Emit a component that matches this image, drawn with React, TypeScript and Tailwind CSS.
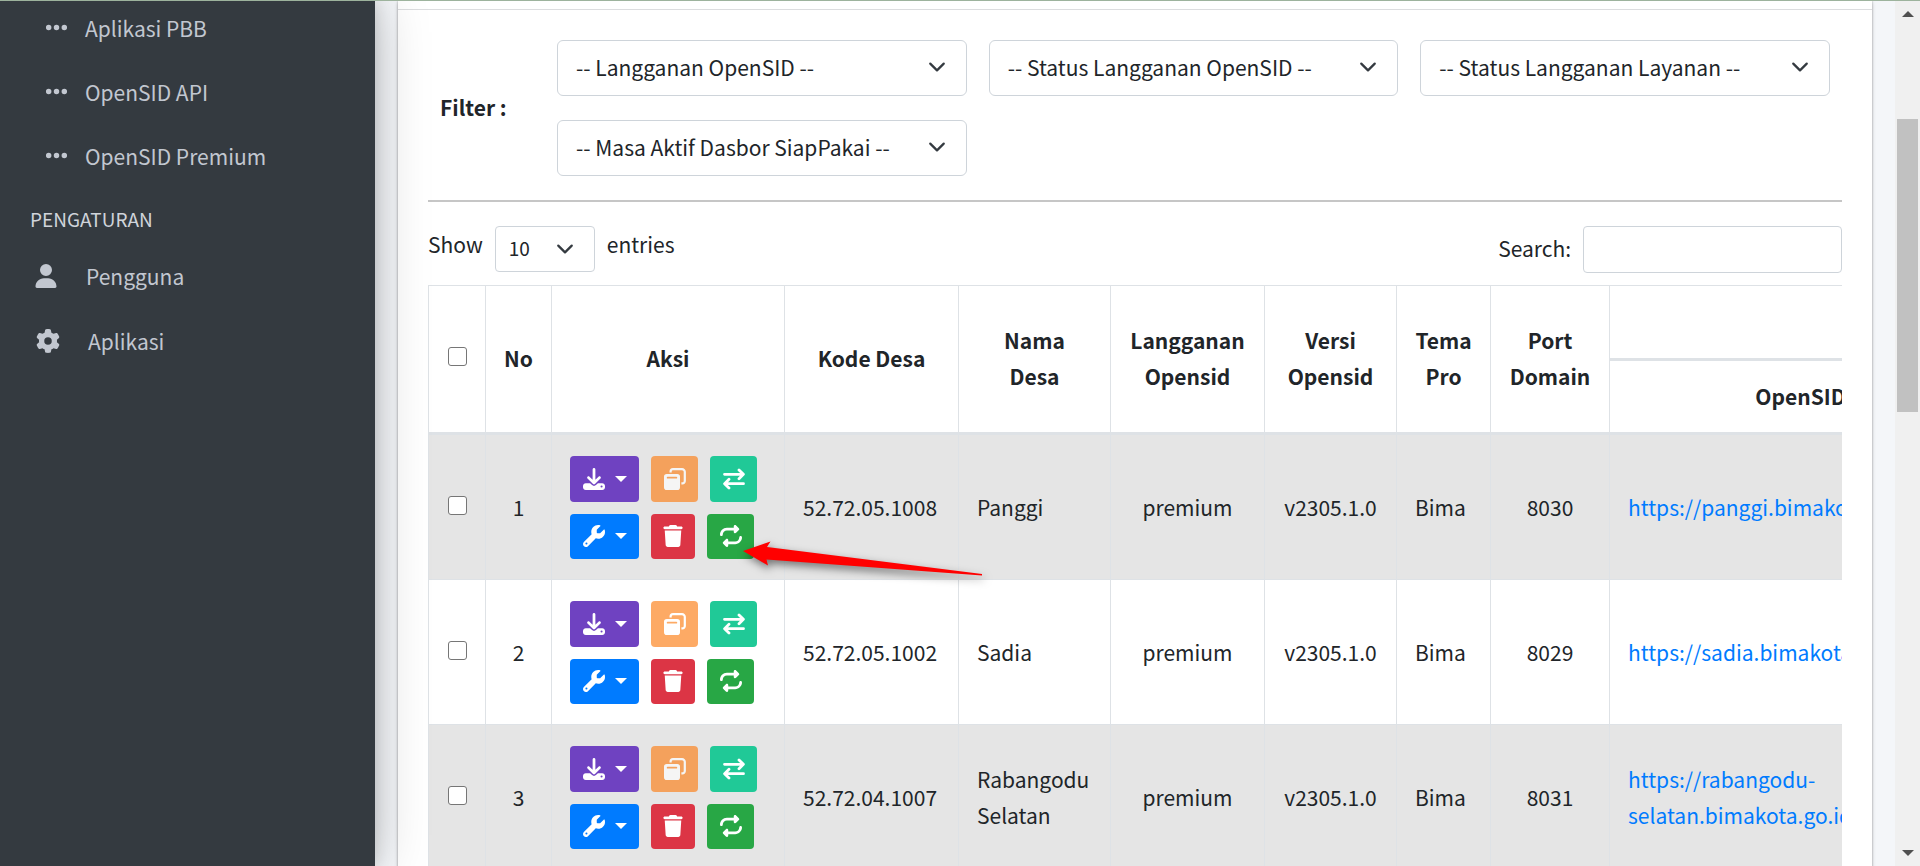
import { useState } from 'react'
import { FaDownload, FaEllipsis, FaGear, FaRepeat, FaTrash, FaUser, FaWrench } from 'react-icons/fa6'

interface Desa {
  no: number
  kode: string
  nama: string
  langganan: string
  versi: string
  tema: string
  port: string
  url: string
}

const daftarDesa: Desa[] = [
  { no: 1, kode: '52.72.05.1008', nama: 'Panggi', langganan: 'premium', versi: 'v2305.1.0', tema: 'Bima', port: '8030', url: 'https://panggi.bimakota.go.id' },
  { no: 2, kode: '52.72.05.1002', nama: 'Sadia', langganan: 'premium', versi: 'v2305.1.0', tema: 'Bima', port: '8029', url: 'https://sadia.bimakota.go.id' },
  { no: 3, kode: '52.72.04.1007', nama: 'Rabangodu Selatan', langganan: 'premium', versi: 'v2305.1.0', tema: 'Bima', port: '8031', url: 'https://rabangodu-selatan.bimakota.go.id' },
]

const filters = [
  '-- Langganan OpenSID --',
  '-- Status Langganan OpenSID --',
  '-- Status Langganan Layanan --',
  '-- Masa Aktif Dasbor SiapPakai --',
]

const modules = ['Aplikasi PBB', 'OpenSID API', 'OpenSID Premium']

const checkboxClass =
  'appearance-none block mx-auto mb-1 w-[19px] h-[19px] rounded-[3px] border border-[#767676] bg-white checked:bg-[#007bff]'

function Chevron({ className }: { className: string }) {
  return (
    <svg viewBox="0 0 16 16" className={`absolute pointer-events-none w-[18px] h-[18px] ${className}`} fill="none" stroke="#343a40" strokeWidth="2" strokeLinecap="round" strokeLinejoin="round">
      <path d="m2 5 6 6 6-6" />
    </svg>
  )
}

function Caret() {
  return (
    <svg viewBox="0 0 12 6" className="w-3 h-[6px]" fill="currentColor">
      <path d="M0 0h12L6 6z" />
    </svg>
  )
}

function CopyIcon() {
  return (
    <svg viewBox="0 0 22 22" className="w-[22px] h-[22px]">
      <path
        fill="currentColor"
        fillRule="evenodd"
        d="M2.800 6H13.200A2.800 2.800 0 0 1 16 8.800V19.200A2.800 2.800 0 0 1 13.200 22H2.800A2.800 2.800 0 0 1 0 19.200V8.800A2.800 2.800 0 0 1 2.800 6ZM3.700 8.700a.9.9 0 0 0 0 1.900H12.300a.9.9 0 0 0 0-1.900Z"
      />
      <path fill="none" stroke="currentColor" strokeWidth="2.2" strokeLinecap="butt" d="M6.600 4.600V3.600A2.400 2.400 0 0 1 9 1.200H18A2.800 2.800 0 0 1 20.800 4V13A2.400 2.400 0 0 1 18.400 15.400H17.400" />
    </svg>
  )
}

function SwapIcon() {
  return (
    <svg viewBox="0 0 22 22" className="w-[22px] h-[22px]" fill="none" stroke="currentColor" strokeWidth="2.8" strokeLinecap="round" strokeLinejoin="round">
      <path d="M1.500 6.300H20M16 1.900 20.400 6.300 16 10.700" />
      <path d="M20.500 15.700H2M6 11.300 1.600 15.700 6 20.100" />
    </svg>
  )
}

function Pointer() {
  return (
    <svg
      viewBox="0 0 250 44"
      className="absolute left-[33px] top-[22px] z-20 w-[250px] h-11 max-w-none pointer-events-none overflow-visible drop-shadow-[2px_4px_4px_rgba(0,0,0,0.5)]"
    >
      <path d="M3 15 30.500 5.500 27 11 242 38 242 39.500 26.500 23.500 28 29.500Z" fill="#ff0000" />
    </svg>
  )
}

function Actions({ marked }: { marked: boolean }) {
  return (
    <div className="flex flex-col gap-3 text-white">
      <div className="flex gap-3">
        <button aria-label="Unduh" className="flex items-center justify-center gap-[10px] w-[69px] h-[46px] rounded bg-[#6f42c1]">
          <FaDownload size={22} />
          <Caret />
        </button>
        <button aria-label="Salin" disabled className="flex items-center justify-center w-[47px] h-[46px] rounded bg-[#fd7e14] opacity-65">
          <CopyIcon />
        </button>
        <button aria-label="Pindah" className="flex items-center justify-center w-[47px] h-[46px] rounded bg-[#20c997]">
          <SwapIcon />
        </button>
      </div>
      <div className="flex gap-3">
        <button aria-label="Konfigurasi" className="flex items-center justify-center gap-[10px] w-[69px] h-[45px] rounded bg-[#007bff]">
          <FaWrench size={22} />
          <Caret />
        </button>
        <button aria-label="Hapus" className="flex items-center justify-center w-11 h-[45px] rounded bg-[#dc3545]">
          <FaTrash size={22} />
        </button>
        <div className="relative">
          <button aria-label="Perbarui" className="flex items-center justify-center w-[47px] h-[45px] rounded bg-[#28a745]">
            <FaRepeat size={22} />
          </button>
          {marked && <Pointer />}
        </div>
      </div>
    </div>
  )
}

function Sidebar() {
  return (
    <aside className="relative z-10 shrink-0 w-[375px] bg-[#343a40] text-[#c2c7d0] shadow-[0_0_52px_rgba(0,0,0,0.22),0_0_15px_rgba(0,0,0,0.15)]">
      <nav className="-mt-1">
        {modules.map((item) => (
          <a key={item} href="#" className="flex items-center h-16 pb-[3px] pl-11">
            <FaEllipsis size={25} className="mr-4" />
            {item}
          </a>
        ))}
        <div className="flex items-center h-14 pt-1 pl-[30px] text-[19px] text-[#d0d4db]">PENGATURAN</div>
        <a href="#" className="flex items-center h-[65px] pb-[3px] pl-[34px]">
          <FaUser size={24} className="mr-7" />
          Pengguna
        </a>
        <a href="#" className="flex items-center h-[65px] pb-[3px] pl-9">
          <FaGear size={24} className="mr-7" />
          Aplikasi
        </a>
      </nav>
    </aside>
  )
}

export default function App() {
  const [selected, setSelected] = useState<number[]>([])

  const toggle = (no: number) => {
    setSelected(selected.includes(no) ? selected.filter((n) => n !== no) : [...selected, no])
  }

  const toggleAll = () => {
    setSelected(selected.length === daftarDesa.length ? [] : daftarDesa.map((d) => d.no))
  }

  return (
    <div className="flex h-screen overflow-hidden border-t border-[#9db39d] bg-[#f4f6f9] font-['Noto_Sans_CJK_JP',sans-serif] text-[21px] leading-9 text-[#212529]">
      <Sidebar />

      <main className="flex-1 min-w-0 px-[23px]">
        <div className="min-h-full bg-white shadow-[0_0_2px_rgba(0,0,0,0.3),0_2px_4px_rgba(0,0,0,0.2)]">
          <div className="h-[9px] border-b border-[#dcdddf]" />
          <div className="px-[30px] pt-[30px]">
            <div className="flex items-center pl-3">
              <div className="w-[117px] pb-[2px] font-bold">Filter :</div>
              <div className="flex-1 grid grid-cols-3 gap-x-[22px] gap-y-6 pr-3">
                {filters.map((label) => (
                  <div key={label} className="relative">
                    <select aria-label={label} className="appearance-none block w-full h-14 pb-[2px] pl-[18px] pr-12 rounded-[6px] border border-[#ced4da] bg-white">
                      <option>{label}</option>
                    </select>
                    <Chevron className="right-[21px] top-[18px]" />
                  </div>
                ))}
              </div>
            </div>

            <hr className="mt-6 mb-6 border-0 h-[2px] bg-[#c6c6c6]" />

            <div className="flex justify-between">
              <div className="flex items-start">
                <label htmlFor="entries">Show</label>
                <div className="relative mx-3">
                  <select id="entries" className="appearance-none block w-[100px] h-[46px] pb-[2px] pl-[13px] rounded border border-[#ced4da] bg-white text-[19px]">
                    <option>10</option>
                  </select>
                  <Chevron className="right-[21px] top-[14px]" />
                </div>
                <span>entries</span>
              </div>
              <div className="flex items-center gap-3">
                <label htmlFor="search" className="pb-[3px]">Search:</label>
                <input id="search" type="search" className="w-[259px] h-[47px] px-3 rounded border border-[#ced4da] bg-white" />
              </div>
            </div>

            <div className="mt-3 overflow-hidden">
              <table className="table-fixed border-collapse w-[1563px] [&_td]:border [&_th]:border [&_td]:border-[#dee2e6] [&_th]:border-[#dee2e6] [&_th]:border-b-[3px] [&_th]:pb-[2px] [&_td]:px-[18px]">
                <colgroup>
                  <col className="w-[57px]" />
                  <col className="w-[66px]" />
                  <col className="w-[233px]" />
                  <col className="w-[174px]" />
                  <col className="w-[152px]" />
                  <col className="w-[154px]" />
                  <col className="w-[132px]" />
                  <col className="w-[94px]" />
                  <col className="w-[119px]" />
                  <col className="w-[382px]" />
                </colgroup>
                <thead>
                  <tr className="h-[74px]">
                    <th rowSpan={2}>
                      <input type="checkbox" aria-label="Pilih semua" checked={selected.length === daftarDesa.length} onChange={toggleAll} className={checkboxClass} />
                    </th>
                    <th rowSpan={2}>No</th>
                    <th rowSpan={2}>Aksi</th>
                    <th rowSpan={2}>Kode Desa</th>
                    <th rowSpan={2}>Nama<br />Desa</th>
                    <th rowSpan={2}>Langganan Opensid</th>
                    <th rowSpan={2}>Versi<br />Opensid</th>
                    <th rowSpan={2}>Tema<br />Pro</th>
                    <th rowSpan={2}>Port<br />Domain</th>
                    <th></th>
                  </tr>
                  <tr className="h-[74px]">
                    <th>OpenSID</th>
                  </tr>
                </thead>
                <tbody>
                  {daftarDesa.map((desa) => (
                    <tr key={desa.no} className="h-[145px] first:h-[146px] odd:bg-[#e5e5e5]">
                      <td>
                        <input type="checkbox" aria-label={desa.nama} checked={selected.includes(desa.no)} onChange={() => toggle(desa.no)} className={checkboxClass} />
                      </td>
                      <td className="text-center">{desa.no}</td>
                      <td>
                        <Actions marked={desa.no === 1} />
                      </td>
                      <td>{desa.kode}</td>
                      <td>{desa.nama}</td>
                      <td className="text-center">{desa.langganan}</td>
                      <td className="text-center">{desa.versi}</td>
                      <td>{desa.tema}</td>
                      <td className="text-center">{desa.port}</td>
                      <td>
                        <a href={desa.url} className="text-[#007bff]">{desa.url}</a>
                      </td>
                    </tr>
                  ))}
                </tbody>
              </table>
            </div>
          </div>
        </div>
      </main>

      {/* page scrollbar */}
      <div className="shrink-0 flex flex-col items-center justify-between w-[25px] py-[10px] bg-[#f0f0f0] text-[#505050]">
        <svg viewBox="0 0 12 6" className="w-3 h-[6px]" fill="currentColor">
          <path d="M0 6h12L6 0z" />
        </svg>
        <div className="flex-1 w-[21px] pt-[102px]">
          <div className="h-[293px] bg-[#c1c1c1]" />
        </div>
        <Caret />
      </div>
    </div>
  )
}
